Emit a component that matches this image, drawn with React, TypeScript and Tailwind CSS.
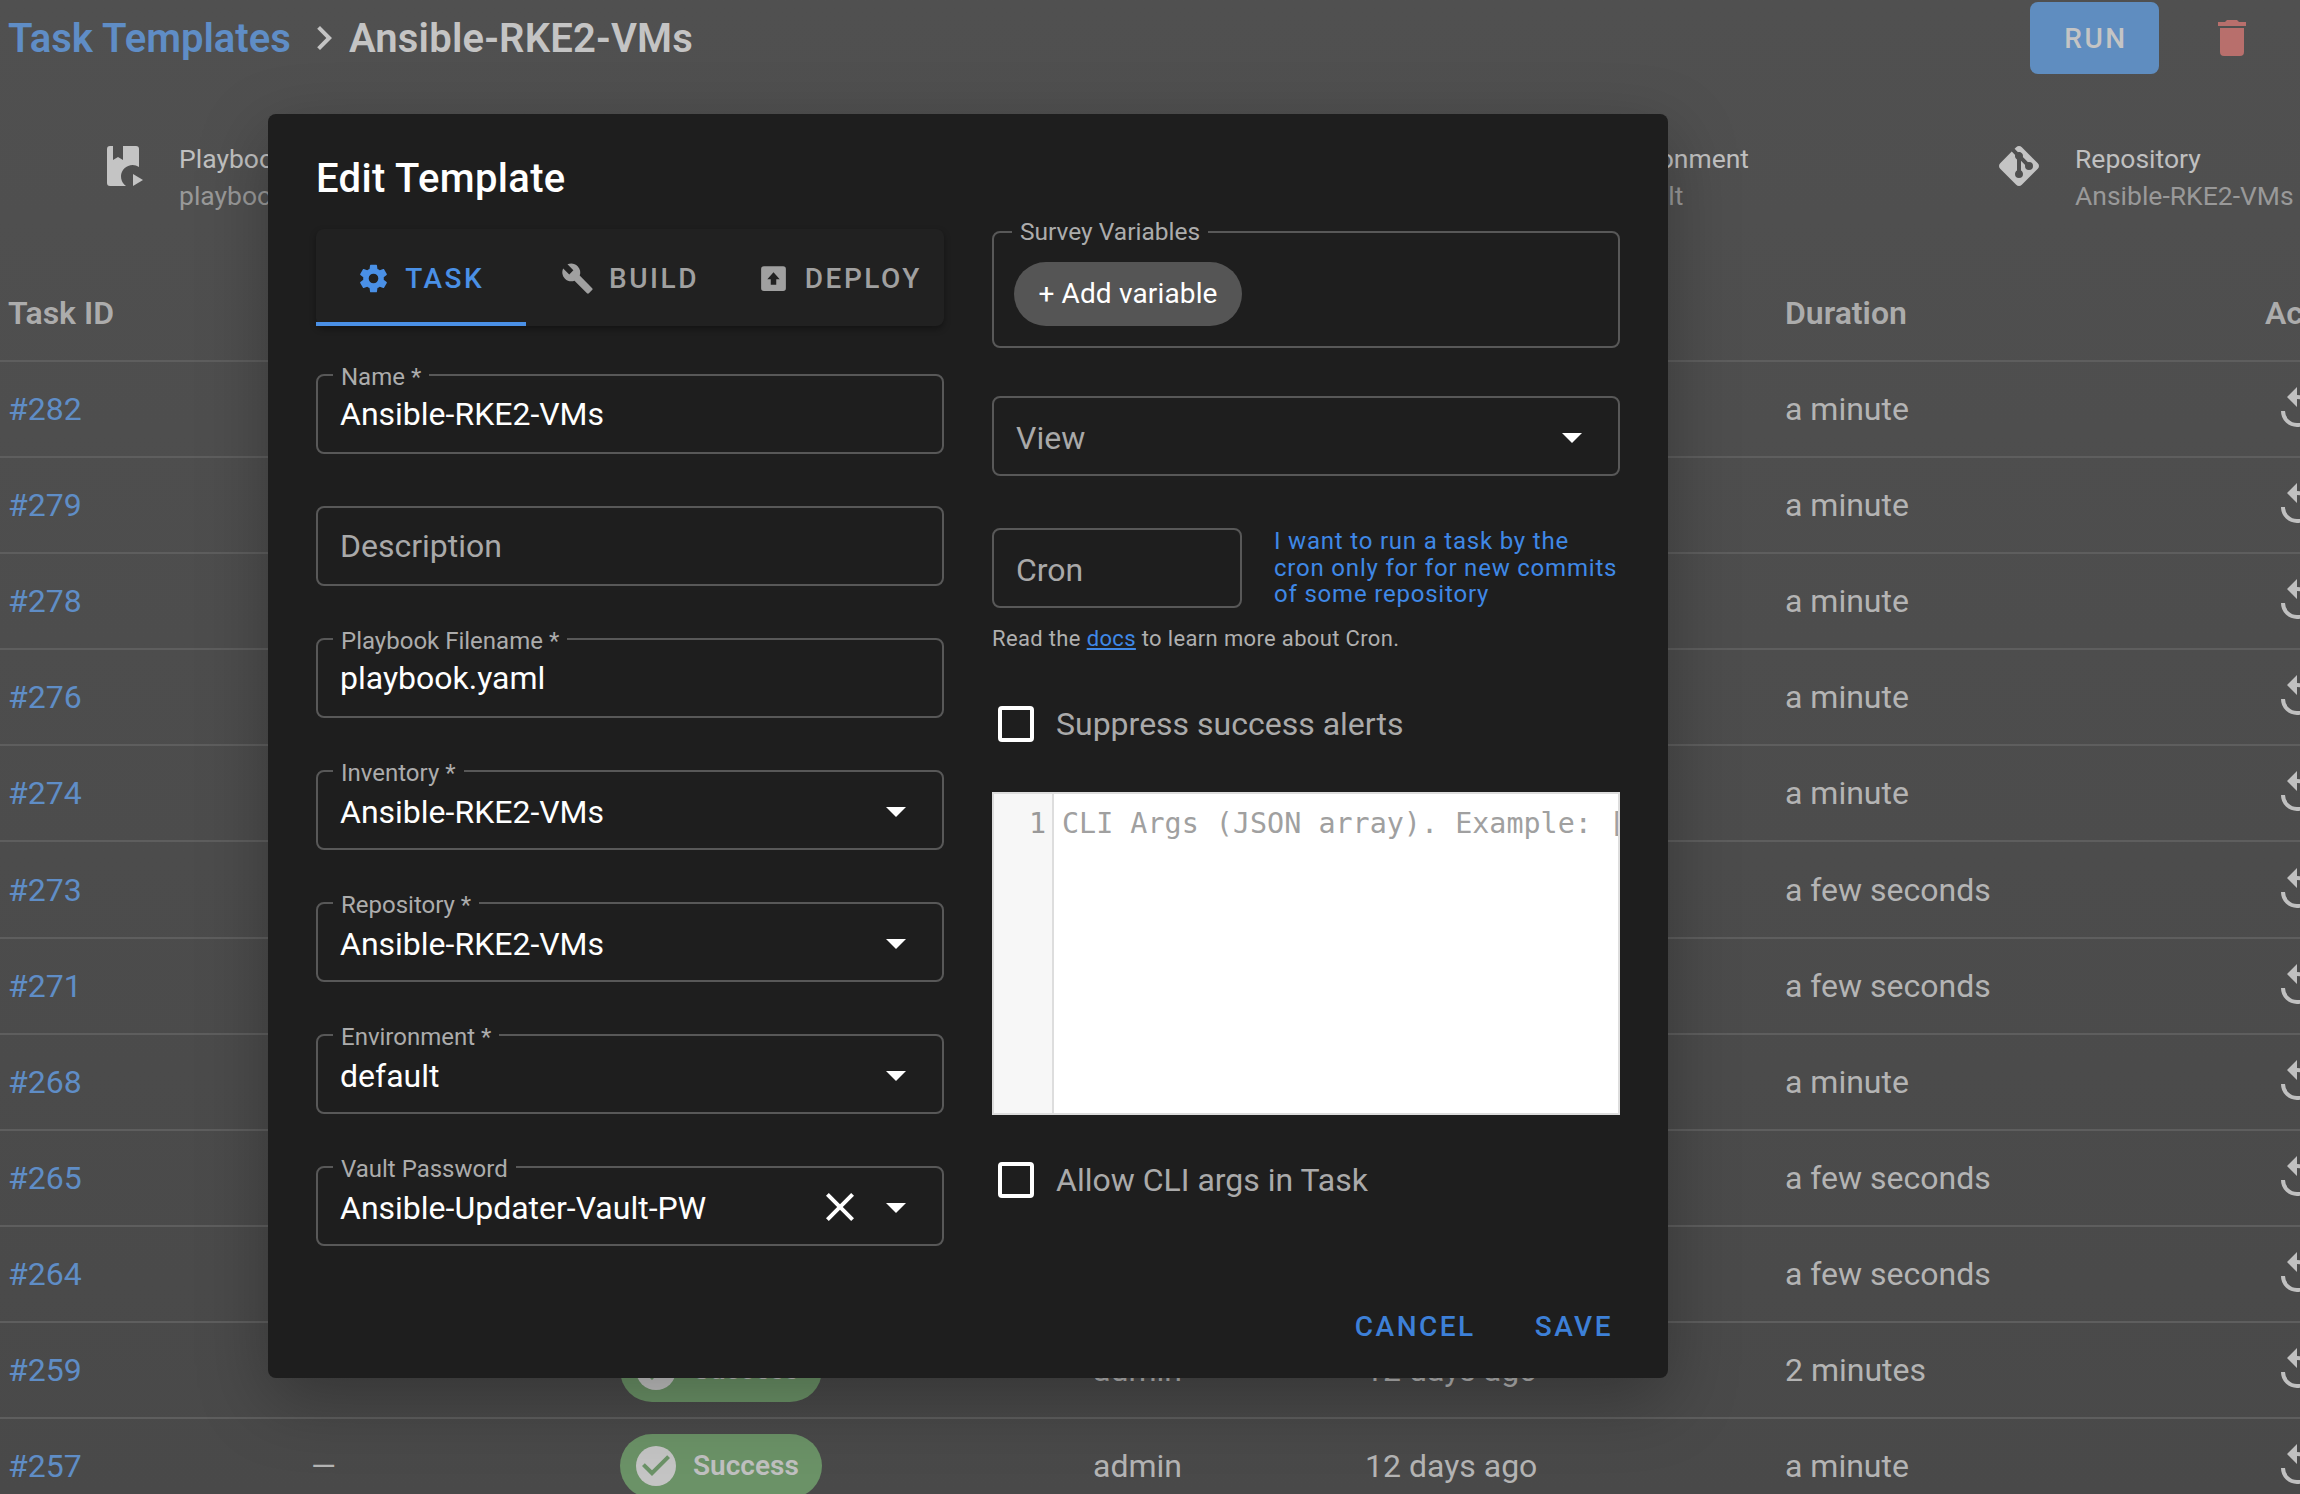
import type { ReactNode } from 'react';

const PATHS = {
  cog: 'M12,15.5A3.5,3.5 0 0,1 8.5,12A3.5,3.5 0 0,1 12,8.5A3.5,3.5 0 0,1 15.5,12A3.5,3.5 0 0,1 12,15.5M19.43,12.97C19.47,12.65 19.5,12.33 19.5,12C19.5,11.67 19.47,11.34 19.43,11L21.54,9.37C21.73,9.22 21.78,8.95 21.66,8.73L19.66,5.27C19.54,5.05 19.27,4.96 19.05,5.05L16.56,6.05C16.04,5.66 15.5,5.32 14.87,5.07L14.5,2.42C14.46,2.18 14.25,2 14,2H10C9.75,2 9.54,2.18 9.5,2.42L9.13,5.07C8.5,5.32 7.96,5.66 7.44,6.05L4.95,5.05C4.73,4.96 4.46,5.05 4.34,5.27L2.34,8.73C2.21,8.95 2.27,9.22 2.46,9.37L4.57,11C4.53,11.34 4.5,11.67 4.5,12C4.5,12.33 4.53,12.65 4.57,12.97L2.46,14.63C2.27,14.78 2.21,15.05 2.34,15.27L4.34,18.73C4.46,18.95 4.73,19.03 4.95,18.95L7.44,17.94C7.96,18.34 8.5,18.68 9.13,18.93L9.5,21.58C9.54,21.82 9.75,22 10,22H14C14.25,22 14.46,21.82 14.5,21.58L14.87,18.93C15.5,18.67 16.04,18.34 16.56,17.94L19.05,18.95C19.27,19.03 19.54,18.95 19.66,18.73L21.66,15.27C21.78,15.05 21.73,14.78 21.54,14.63L19.43,12.97Z',
  wrench: 'M22.7,19L13.6,9.9C14.5,7.6 14,4.9 12.1,3C10.1,1 7.1,0.6 4.7,1.7L9,6L6,9L1.6,4.7C0.4,7.1 0.9,10.1 2.9,12.1C4.8,14 7.5,14.5 9.8,13.6L18.9,22.7C19.3,23.1 19.9,23.1 20.3,22.7L22.6,20.4C23.1,20 23.1,19.3 22.7,19Z',
  upload: 'M5 3H19A2 2 0 0 1 21 5V19A2 2 0 0 1 19 21H5A2 2 0 0 1 3 19V5A2 2 0 0 1 5 3ZM12 7.5L7.5 12.5H10V16.5H14V12.5H16.5Z',
  trash: 'M19,4H15.5L14.5,3H9.5L8.5,4H5V6H19M6,19A2,2 0 0,0 8,21H16A2,2 0 0,0 18,19V7H6V19Z',
  close: 'M19,6.41L17.59,5L12,10.59L6.41,5L5,6.41L10.59,12L5,17.59L6.41,19L12,13.41L17.59,19L19,17.59L13.41,12L19,6.41Z',
  menuDown: 'M7,10L12,15L17,10H7Z',
  git: 'M2.6,10.59L8.38,4.8L10.07,6.5C9.83,7.35 10.22,8.28 11,8.73V14.27C10.4,14.61 10,15.26 10,16A2,2 0 0,0 12,18A2,2 0 0,0 14,16C14,15.26 13.6,14.61 13,14.27V9.41L15.07,11.5C15,11.65 15,11.82 15,12A2,2 0 0,0 17,14A2,2 0 0,0 19,12A2,2 0 0,0 17,10C16.82,10 16.65,10 16.5,10.07L13.93,7.5C14.19,6.57 13.71,5.55 12.78,5.16C12.35,5 11.9,4.96 11.5,5.07L9.8,3.38L10.59,2.6C11.37,1.81 12.63,1.81 13.41,2.6L21.4,10.59C22.19,11.37 22.19,12.63 21.4,13.41L13.41,21.4C12.63,22.19 11.37,22.19 10.59,21.4L2.6,13.41C1.81,12.63 1.81,11.37 2.6,10.59Z',
  replay: 'M12,5V1L7,6L12,11V7A6,6 0 0,1 18,13A6,6 0 0,1 12,19A6,6 0 0,1 6,13H4A8,8 0 0,0 12,21A8,8 0 0,0 20,13A8,8 0 0,0 12,5Z',
  chevron: 'M8.59,16.58L13.17,12L8.59,7.41L10,6L16,12L10,18L8.59,16.58Z',
  server: 'M4,1H20A1,1 0 0,1 21,2V6A1,1 0 0,1 20,7H4A1,1 0 0,1 3,6V2A1,1 0 0,1 4,1M4,9H20A1,1 0 0,1 21,10V14A1,1 0 0,1 20,15H4A1,1 0 0,1 3,14V10A1,1 0 0,1 4,9Z',
};

function Icon({ d, size = 48, className }: { d: string; size?: number; className?: string }) {
  return (
    <svg viewBox="0 0 24 24" width={size} height={size} fill="currentColor" fillRule="evenodd" className={`shrink-0 ${className ?? ''}`}>
      <path d={d} />
    </svg>
  );
}

function PlaybookIcon() {
  return (
    <svg viewBox="0 0 40 40" width={40} height={40} fill="#c4c4c4" className="shrink-0">
      <path d="M3 0H6V14L11 11L16 14V0H29A3 3 0 0 1 32 3V21A11.2 11.2 0 0 0 19 40H3A3 3 0 0 1 0 37V3A3 3 0 0 1 3 0Z" />
      <path d="M26 28L36 34L26 40Z" />
    </svg>
  );
}

const ROWS = [
  ['#282', 'a minute'],
  ['#279', 'a minute'],
  ['#278', 'a minute'],
  ['#276', 'a minute'],
  ['#274', 'a minute'],
  ['#273', 'a few seconds'],
  ['#271', 'a few seconds'],
  ['#268', 'a minute'],
  ['#265', 'a few seconds'],
  ['#264', 'a few seconds'],
  ['#259', '2 minutes'],
  ['#257', 'a minute'],
];

const ROW_GRID = 'grid grid-cols-[304px_308px_473px_273px_419px_480px_1fr] items-center pl-2 border-b-2 border-[#5e5e5e] w-[2300px]';

function InfoItem({ icon, title, value, className }: { icon: ReactNode; title: string; value: string; className: string }) {
  return (
    <div className={`flex items-start ${className}`}>
      {icon}
      <div className="ml-[32px] text-[26.5px] leading-[37px] -mt-[6.5px] whitespace-nowrap">
        <div className="text-[#c0c0c0]">{title}</div>
        <div className="text-[#999999]">{value}</div>
      </div>
    </div>
  );
}

function Field({ label, value, muted, select, clear, shifted, className }: {
  label?: string; value: string; muted?: boolean; select?: boolean; clear?: boolean; shifted?: boolean; className?: string;
}) {
  return (
    <div className={`relative h-20 rounded-lg border-2 border-[#585858] flex items-center pl-[22px] text-[32px] ${muted ? 'text-[#a9a9a9]' : 'text-white'} ${className ?? ''}`}>
      {label && (
        <span className="absolute -top-[10px] left-[15px] px-[8px] bg-[#1e1e1e] text-[24px] leading-[22px] text-[#acacac] whitespace-nowrap">
          {label}
        </span>
      )}
      <span className={select || shifted ? 'pt-[3px]' : ''}>{value}</span>
      {(select || clear) && (
        <div className="ml-auto mr-[22px] pt-[2px] flex items-center gap-[8px] text-white">
          {clear && <Icon d={PATHS.close} />}
          {select && <Icon d={PATHS.menuDown} />}
        </div>
      )}
    </div>
  );
}

function Tab({ d, label, active }: { d: string; label: string; active?: boolean }) {
  return (
    <div className={`relative flex-1 flex items-center justify-center gap-[15px] pt-[2px] text-[28px] font-medium tracking-[2.5px] ${active ? 'text-[#4a90e6]' : 'text-[#a0a0a0]'}`}>
      <Icon d={d} size={33} />
      <span>{label}</span>
      {active && <div className="absolute left-0 -right-px bottom-0 h-1 bg-[#4a90e6]" />}
    </div>
  );
}

function Checkbox({ label, className }: { label: string; className?: string }) {
  return (
    <div className={`flex items-center h-9 pl-[6px] ${className ?? ''}`}>
      <div className="w-9 h-9 border-4 border-white rounded-[4px]" />
      <span className="ml-[22px] text-[32px] text-[#aaaaaa]">{label}</span>
    </div>
  );
}

export default function App() {
  return (
    <div className="relative w-[2300px] h-[1494px] overflow-hidden bg-gradient-to-b from-[#505050] to-[#494949] font-['Roboto',sans-serif]">
      {/* Header */}
      <div className="h-[76px] flex items-center pl-2 pr-[44px]">
        <span className="pt-[2px] text-[40px] font-semibold text-[#5f8dc6]">Task Templates</span>
        <Icon d={PATHS.chevron} className="ml-[9px] text-[#c4c4c4]" />
        <span className="ml-px pt-[2px] text-[40px] font-semibold tracking-[0.2px] text-[#c4c4c4]">Ansible-RKE2-VMs</span>
        <div className="ml-auto w-[129px] h-[72px] pl-[3px] pt-[2px] rounded-lg bg-[#5f8dc0] flex items-center justify-center text-[28px] font-medium tracking-[2.5px] text-[#c4c4c4]">
          RUN
        </div>
        <Icon d={PATHS.trash} className="ml-[49px] text-[#b86f6c]" />
      </div>

      {/* Template summary */}
      <div className="h-[190px] pt-[70px] pl-[107px] flex">
        <InfoItem icon={<PlaybookIcon />} title="Playbook" value="playbook.yaml" className="w-[700px]" />
        <InfoItem icon={<Icon d={PATHS.server} className="text-[#c4c4c4] -mt-1" />} title="Inventory" value="Ansible-RKE2-VMs" className="w-[714px]" />
        <InfoItem icon={<Icon d={PATHS.server} className="text-[#c4c4c4] -mt-1" />} title="Environment" value="default" className="w-[474px]" />
        <InfoItem icon={<Icon d={PATHS.git} className="text-[#c4c4c4] -mt-1" />} title="Repository" value="Ansible-RKE2-VMs" className="w-[300px]" />
      </div>

      {/* Task table */}
      <div className={`${ROW_GRID} h-[96px] text-[32px] font-semibold text-[#acacac]`}>
        <span>Task ID</span>
        <span>Version</span>
        <span>Status</span>
        <span>User</span>
        <span>Start</span>
        <span>Duration</span>
        <span className="whitespace-nowrap">Actions</span>
      </div>
      {ROWS.map(([id, duration]) => (
        <div key={id} className={`${ROW_GRID} h-[96.1px] text-[32px] text-[#b4b4b4]`}>
          <span className="text-[#5f8dc6]">{id}</span>
          <span className="-ml-px">—</span>
          <div className="w-[202px] h-[64px] rounded-full bg-[#6b9267] flex items-center pl-[16px] text-[28px] font-semibold text-[#c0c0c0]">
            <svg viewBox="2 2 20 20" width={40} height={40} className="shrink-0">
              <circle cx="12" cy="12" r="10" fill="#c4c4c4" />
              <path d="M10 17L5 12L6.41 10.59L10 14.17L17.59 6.58L19 8L10 17Z" fill="#6b9267" />
            </svg>
            <span className="ml-[17px]">Success</span>
          </div>
          <span>admin</span>
          <span className="-ml-px">12 days ago</span>
          <span>{duration}</span>
          <Icon d={PATHS.replay} className="ml-2 text-[#c0c0c0]" />
        </div>
      ))}

      {/* Edit dialog */}
      <div className="absolute left-[268px] top-[114px] w-[1400px] h-[1264px] rounded-lg bg-[#1e1e1e] shadow-[0_22px_70px_rgba(0,0,0,0.28)] flex flex-col px-12">
        <h2 className="pt-[41px] h-[87px] text-[40px] leading-[48px] font-medium tracking-[0.35px] text-white">Edit Template</h2>

        <div className="mt-[28px] grid grid-cols-[628px_628px] gap-x-12">
          <div className="flex flex-col">
            <div className="h-[97px] flex rounded-lg bg-[#212121] shadow-[0_3px_6px_rgba(0,0,0,0.35)] mb-12">
              <Tab d={PATHS.cog} label="TASK" active />
              <Tab d={PATHS.wrench} label="BUILD" />
              <Tab d={PATHS.upload} label="DEPLOY" />
            </div>
            <div className="flex flex-col gap-[52px]">
              <Field label="Name *" value="Ansible-RKE2-VMs" />
              <Field value="Description" muted />
              <Field label="Playbook Filename *" value="playbook.yaml" />
              <Field label="Inventory *" value="Ansible-RKE2-VMs" select />
              <Field label="Repository *" value="Ansible-RKE2-VMs" select />
              <Field label="Environment *" value="default" select />
              <Field label="Vault Password" value="Ansible-Updater-Vault-PW" select clear />
            </div>
          </div>

          <div className="flex flex-col pt-[2px]">
            <div className="relative h-[117px] rounded-lg border-2 border-[#585858] pl-5 pt-[29px]">
              <span className="absolute -top-[14px] left-[18px] px-[8px] bg-[#1e1e1e] text-[24.5px] leading-[26px] text-[#acacac]">Survey Variables</span>
              <div className="w-[228px] h-16 rounded-full bg-[#555555] flex items-center justify-center text-[28px] tracking-[0.15px] text-white">+ Add variable</div>
            </div>
            <Field value="View" muted select className="mt-[48px]" />

            <div className="mt-[52px] flex items-center">
              <Field value="Cron" muted shifted className="w-[250px]" />
              <div className="ml-[32px] text-[24px] leading-[26.5px] tracking-[0.8px] text-[#3f88e6]">
                I want to run a task by the<br />cron only for for new commits<br />of some repository
              </div>
            </div>
            <div className="mt-[17.5px] h-[26px] text-[22px] leading-[26px] tracking-[0.35px] text-[#b0b0b0]">
              Read the <span className="text-[#3f88e6] underline">docs</span> to learn more about Cron.
            </div>

            <Checkbox label="Suppress success alerts" className="mt-[54.5px]" />

            <div className="mt-[50px] h-[323px] flex border-2 border-[#dddddd] bg-white overflow-hidden font-['DejaVu_Sans_Mono',monospace] text-[28.4px] leading-[40px] text-[#a0a0a0]">
              <div className="w-[60px] shrink-0 bg-[#f7f7f7] border-r-2 border-[#dddddd] pt-[10px] pr-[6px] text-right text-[#999999]">1</div>
              <div className="pl-[8px] pt-[10px] whitespace-pre">CLI Args (JSON array). Example: ["--help"]</div>
            </div>

            <Checkbox label="Allow CLI args in Task" className="mt-[47px]" />
          </div>
        </div>

        <div className="mt-auto mb-[15px] h-[72px] flex items-center justify-end gap-[59px] pr-[7px] text-[28px] font-medium tracking-[2.5px] text-[#3d80d8]">
          <span>CANCEL</span>
          <span>SAVE</span>
        </div>
      </div>
    </div>
  );
}
